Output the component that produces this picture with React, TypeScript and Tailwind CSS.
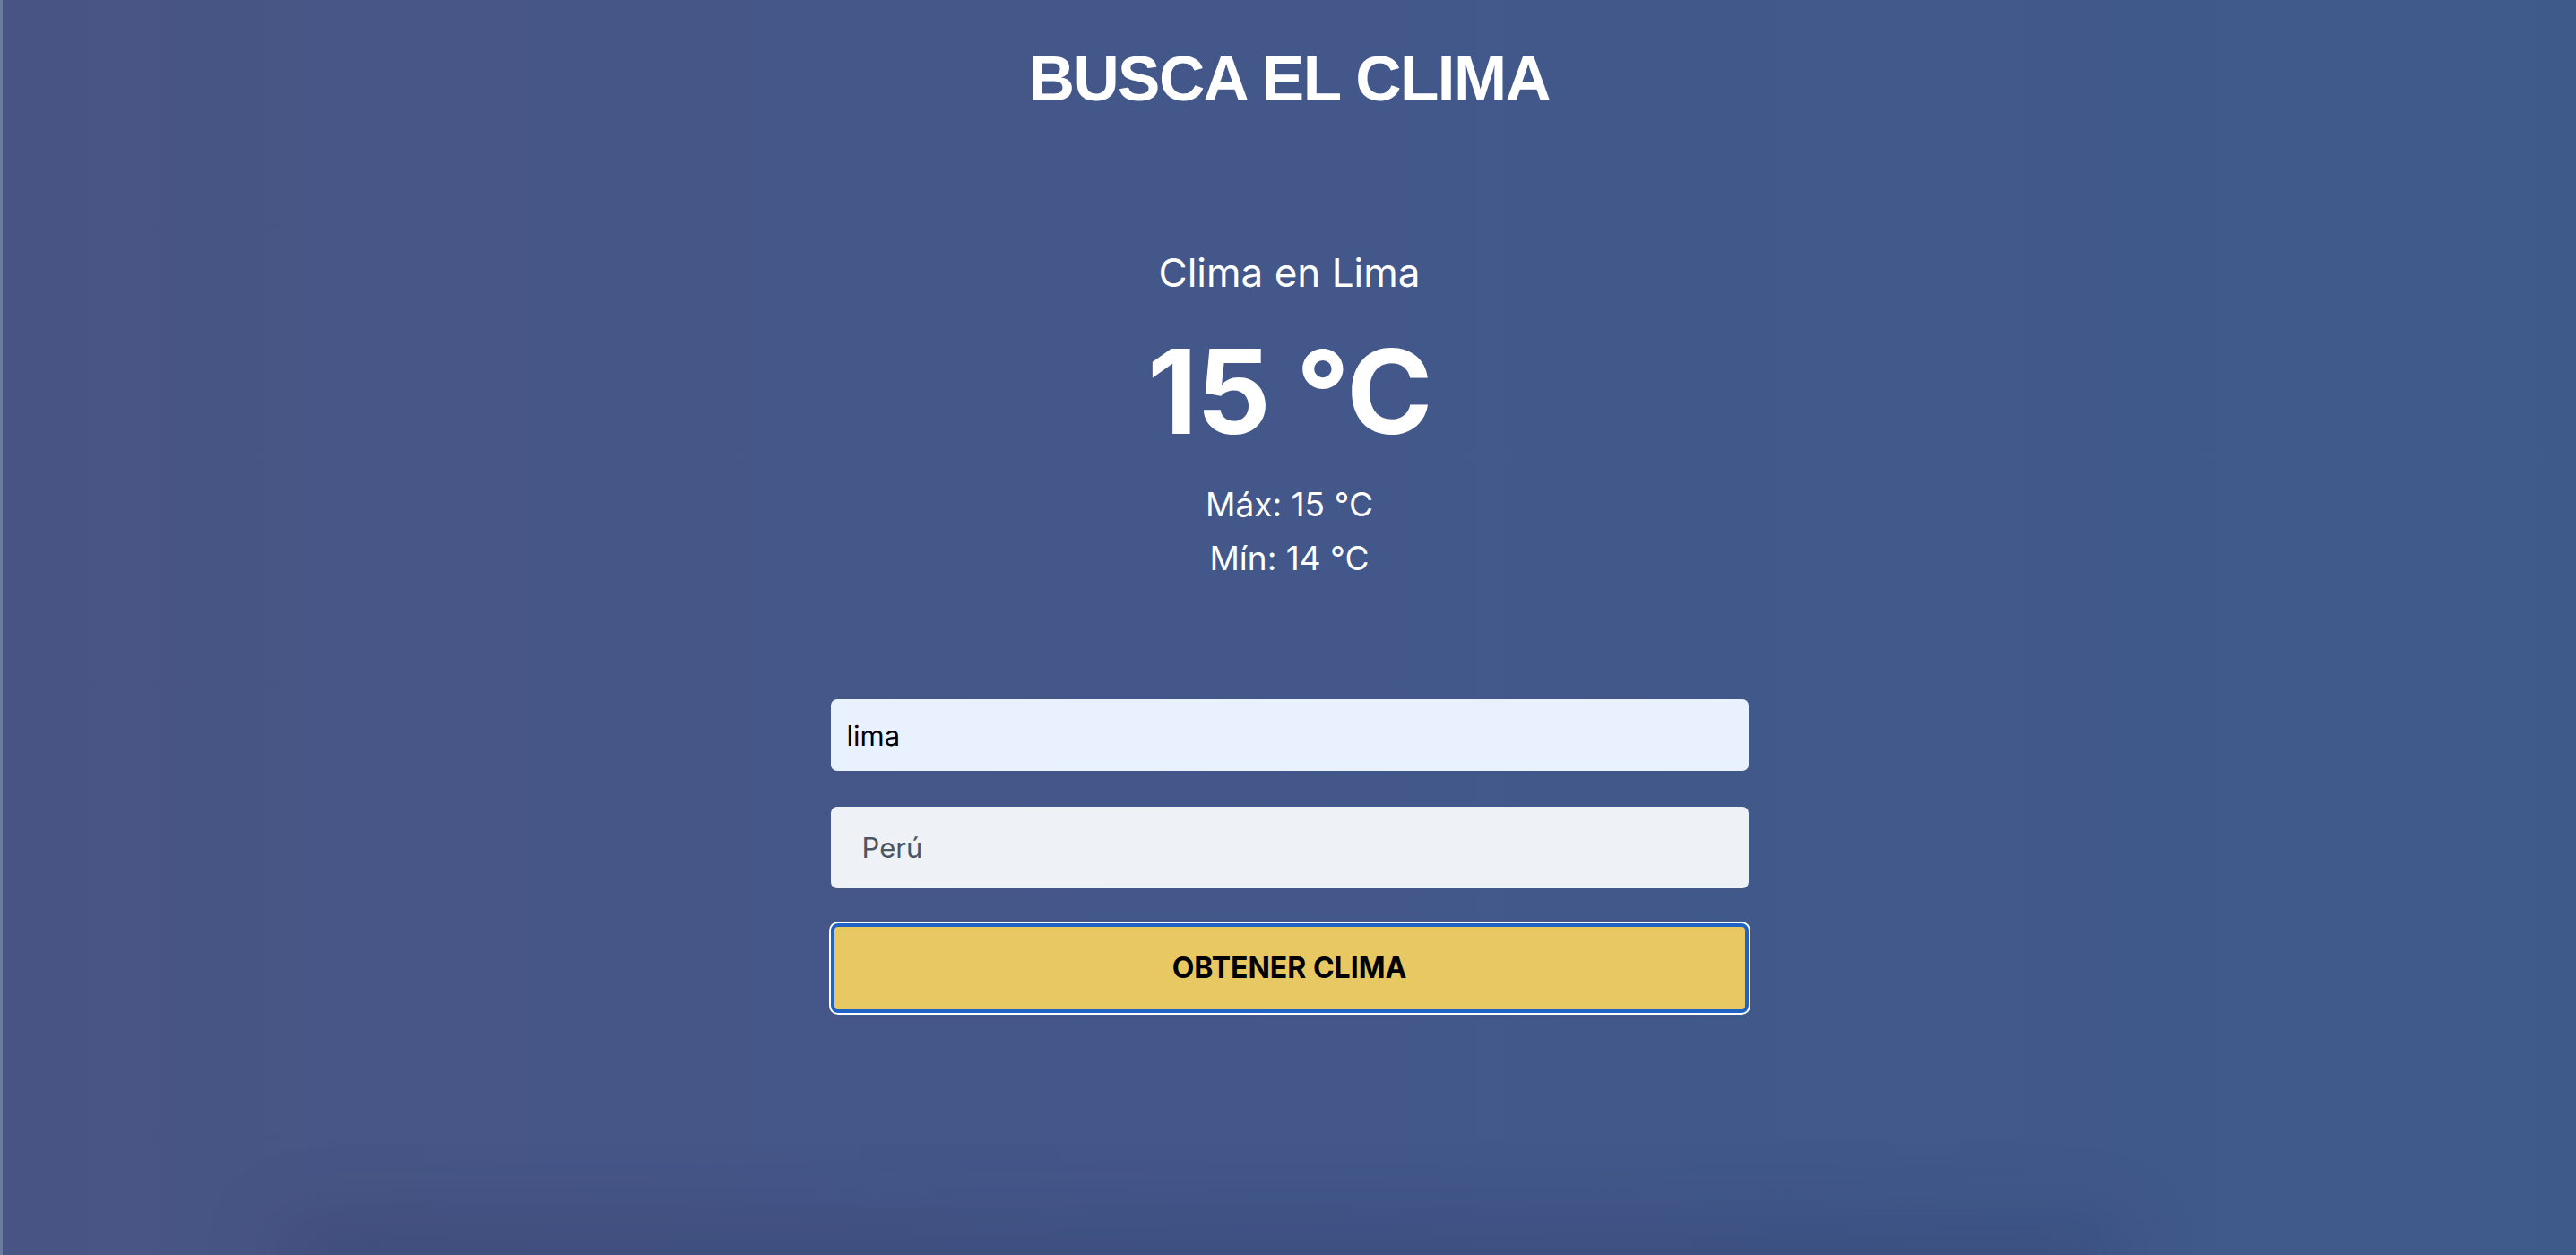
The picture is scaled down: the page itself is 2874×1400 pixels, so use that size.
import { useState } from 'react';

const sans = { fontFamily: 'Inter, "Noto Sans", sans-serif' };

export default function App() {
  const [city, setCity] = useState('lima');
  const [country, setCountry] = useState('');

  return (
    <div className="relative h-[1400px] w-full overflow-hidden border-l-[3px] border-[#6a7ba2] bg-[linear-gradient(to_right,#485584,#43578a_50%,#3e5a8b)] text-white">
      <div className="flex flex-col items-center" style={sans}>
        <h1 className="mt-[53px] text-[71px] font-bold leading-[70px] tracking-[-0.022em] font-['Liberation_Sans',Arial,sans-serif]">
          BUSCA EL CLIMA
        </h1>

        <p className="mt-[159px] text-[44px] leading-[44px]">Clima en Lima</p>
        <p className="mt-[46px] text-[130px] font-bold leading-[130px] tracking-[-0.01em]">15 °C</p>
        <p className="mt-[42px] text-[37px] leading-[37px]">Máx: 15 °C</p>
        <p className="mt-[23px] text-[37px] leading-[37px]">Mín: 14 °C</p>

        <form className="mt-[139px] flex w-[1024px] flex-col" onSubmit={(e) => e.preventDefault()}>
          <input
            value={city}
            onChange={(e) => setCity(e.target.value)}
            className="h-[80px] rounded-[7px] bg-[#e9f0fe] px-[18px] text-[31px] text-black outline-none"
            style={sans}
          />
          <input
            value={country}
            onChange={(e) => setCountry(e.target.value)}
            placeholder="Perú"
            className="mt-[40px] h-[91px] rounded-[7px] bg-[#eef2f7] px-[35px] text-[31px] text-black outline-none placeholder:text-[#4b5563]"
            style={sans}
          />
          <button
            type="submit"
            className="mt-[39px] h-[100px] rounded-[8px] border-4 border-[#1f63c6] bg-[#e8c862] text-[32px] font-bold text-black shadow-[0_0_0_2px_#ffffff]"
            style={sans}
          >
            OBTENER CLIMA
          </button>
        </form>
      </div>
      <div className="pointer-events-none absolute bottom-[-40px] left-[300px] right-[500px] h-[80px] rounded-full bg-[rgba(25,35,70,0.18)] blur-2xl" />
    </div>
  );
}
